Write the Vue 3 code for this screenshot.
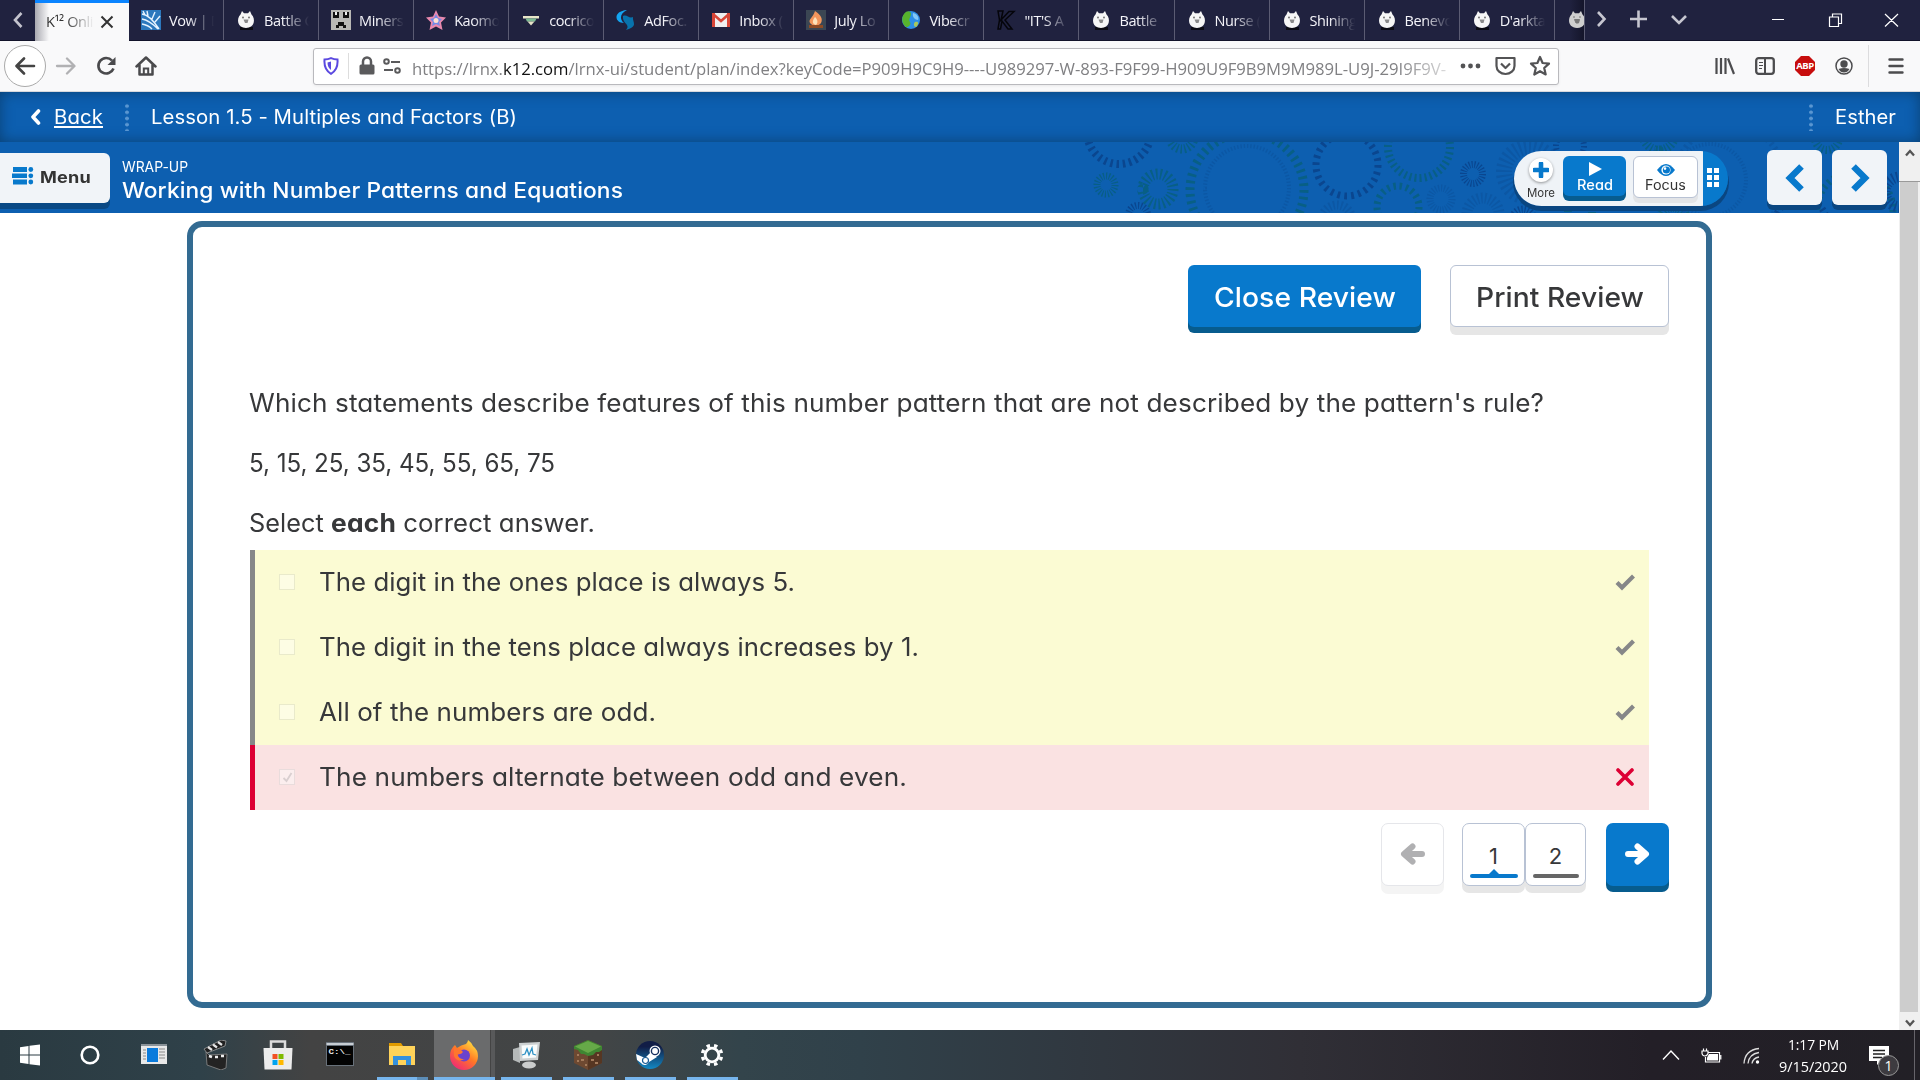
<script setup>
// Keeps a label at a set width: a little letter spacing, the rest by widening the glyphs.
const vFit = {
  mounted(el, { value }) {
    if (!value) return
    const first = el.getBoundingClientRect().width
    el.style.letterSpacing = ((value - first) * 0.15) / el.textContent.length + 'px'
    const natural = el.getBoundingClientRect().width
    el.style.transformOrigin = '0 50%'
    el.style.transform = `scaleX(${value / natural})`
    el.style.marginRight = value - natural + 'px'
  },
}

const tabs = [
  { icon: 'vow', label: 'Vow | D' },
  { icon: 'cat', label: 'Battle C' },
  { icon: 'mine', label: 'Miners' },
  { icon: 'star', label: 'Kaomo' },
  { icon: 'tri', label: 'cocrico' },
  { icon: 'swirl', label: 'AdFoc.' },
  { icon: 'mail', label: 'Inbox (' },
  { icon: 'fire', label: 'July Lo' },
  { icon: 'globe', label: 'Vibecr' },
  { icon: 'k', label: '"IT\'S A' },
  { icon: 'cat', label: 'Battle' },
  { icon: 'cat', label: 'Nurse (' },
  { icon: 'cat', label: 'Shining' },
  { icon: 'cat', label: 'Benevo' },
  { icon: 'cat', label: "D'arkta" },
]

const navy = '#0a468f'
const green = '#085f85'
const faint = '#0c57a4'
const rings = [
  { x: 49, y: -10, r: 32, w: 8, c: navy, n: 32 },
  { x: 112, y: -5, r: 12, w: 9, c: green, n: 20 },
  { x: 36, y: 43, r: 9, w: 7, c: green, n: 20 },
  { x: 88, y: 47, r: 15, w: 11, c: green, n: 22 },
  { x: 68, y: 73, r: 9.5, w: 7, c: navy, n: 20 },
  { x: 177, y: 48, r: 57, w: 9, c: green, n: 52 },
  { x: 177, y: 46, r: 42, w: 4, c: faint, n: 80 },
  { x: 277, y: 23, r: 31, w: 7, c: navy, n: 28 },
  { x: 349, y: 5, r: 31, w: 8, c: green, n: 38 },
  { x: 403, y: 32, r: 9.5, w: 7, c: navy, n: 22 },
  { x: 328, y: 65, r: 21, w: 7, c: green, n: 21 },
  { x: 371, y: 57, r: 11, w: 7, c: faint, n: 24 },
  { x: 267, y: 78, r: 15, w: 9, c: faint, n: 24 },
  { x: 413, y: 72, r: 16, w: 11, c: faint, n: 26 },
  { x: 459, y: 30, r: 25, w: 16, c: faint, n: 32 },
  { x: 453, y: 78, r: 10, w: 9, c: navy, n: 22 },
  { x: 510, y: 70, r: 12, w: 8, c: green, n: 22 },
  { x: 500, y: 4, r: 14, w: 6, c: navy, n: 22 },
  { x: 589, y: -8, r: 16, w: 9, c: green, n: 28 },
  { x: 603, y: 78, r: 13, w: 10, c: green, n: 24 },
  { x: 640, y: 38, r: 36, w: 4, c: faint, n: 70 },
  { x: 660, y: 38, r: 55, w: 6, c: faint, n: 60 },
  { x: 731, y: 82, r: 26, w: 7, c: navy, n: 30 },
  { x: 757, y: -4, r: 12, w: 8, c: green, n: 20 },
  { x: 785, y: 68, r: 38, w: 7, c: green, n: 40 },
  { x: 830, y: 50, r: 15, w: 11, c: navy, n: 24 },
]

const answers = [
  { text: 'The digit in the ones place is always 5.', width: 476, right: true },
  { text: 'The digit in the tens place always increases by 1.', width: 600, right: true },
  { text: 'All of the numbers are odd.', width: 337, right: true },
  { text: 'The numbers alternate between odd and even.', width: 588, right: false },
]

const apps = ['start', 'cortana', 'news', 'clap', 'store', 'cmd', 'folder', 'firefox', 'monitor', 'grass', 'steam', 'gear']
const running = ['folder', 'firefox', 'monitor', 'grass', 'steam', 'gear']
</script>

<template>
  <div class="screen">
    <header class="tabbar">
      <div class="scroll-left">
        <svg width="12" height="18" viewBox="0 0 12 18"><path d="M9.500 2 3 9l6.500 7" fill="none" stroke="#c3c3cd" stroke-width="2.600" /></svg>
      </div>
      <div class="tab active">
        <span class="fade dark">K¹² Onli</span>
        <svg width="14" height="14" viewBox="0 0 14 14"><path d="M1.500 1.500 12.500 12.500M12.500 1.500 1.500 12.500" stroke="#333" stroke-width="2" /></svg>
      </div>
      <div v-for="(t, i) in tabs" :key="i" class="tab">
        <svg class="fav" viewBox="0 0 20 20">
          <template v-if="t.icon === 'cat'">
            <path d="M4 17h13v3H4z" fill="#0b0b14" />
            <path d="M4.500 4.500 6 1l2 2.200h4L14 1l1.500 3.500C20 9 18.500 18 10 18S0 9 4.500 4.500z" fill="#f6f6f6" />
            <circle cx="7" cy="7.500" r=".9" fill="#666" /><circle cx="13" cy="7.500" r=".9" fill="#666" /><path d="M7.500 9.500h5l-1 3.500H9z" fill="#8a8a8a" />
          </template>
          <template v-else-if="t.icon === 'vow'">
            <path d="M0 0h20v20H0z" fill="#2c78bd" />
            <path d="M1 4q8 1 17 15M1 9q7 1 16 10M1 14q6 1 10 5M7 6 6 1M11 9l3-7M14 12l5-6M4 5 2 1" stroke="#e6f3ff" stroke-width="1.400" fill="none" />
          </template>
          <template v-else-if="t.icon === 'mine'">
            <path d="M0 0h20v20H0z" fill="#b8b8b5" /><path d="M2 2h6v6H2zM12 2h6v6h-6zM7 12h6v3h2v3h-3v-2H8v2H5v-3h2z" fill="#111" /><path d="M4 2h2v3H4zM14 2h2v3h-2z" fill="#eee" />
          </template>
          <template v-else-if="t.icon === 'star'">
            <path d="m10 0 3 6.500 7 1-5 5 1.500 7.500L10 16.500 3.500 20 5 12.500l-5-5 7-1z" fill="#e989ae" /><path d="m10 4 2 4 4 1-3 3 1 4-4-2-4 2 1-4-3-3 4-1z" fill="#718be8" /><circle cx="10" cy="10.500" r="2.500" fill="#ffe0d2" />
          </template>
          <template v-else-if="t.icon === 'tri'">
            <path d="M2 6h16v2.500H2z" fill="#e8e6c9" /><path d="M4.500 8.500h11L14 11.500H6z" fill="#7cba94" /><path d="M6.500 11.500h7L10 15.500z" fill="#e6e3c7" />
          </template>
          <template v-else-if="t.icon === 'swirl'">
            <path d="M11 0C-3 1-2 13 8 13 4 10 3 4 11 0z" fill="#13a4f0" /><path d="M7 6c4-2 6 3 10 1-1 5 6 9-7 13 5-6-4-6-3-14z" fill="#0873ad" />
          </template>
          <template v-else-if="t.icon === 'mail'">
            <path d="M1 3h18v14H1z" fill="#efefef" /><path d="M1 3h3v14H1zM16 3h3v14h-3z" fill="#d84638" /><path d="m2 4 8 7 8-7" fill="none" stroke="#d84638" stroke-width="2.500" />
          </template>
          <template v-else-if="t.icon === 'fire'">
            <path d="M0 0h20v20H0z" fill="#3b4653" /><path d="M9 1c6 4 8 8 6 12-3 4-9 3-11 0-2-4 3-5 5-12z" fill="#f3965c" /><path d="M9 7c3 3 3 6 1 8-4-1-4-4-1-8z" fill="#fde2ba" /><path d="M3 15h14v3H3z" fill="#8e4b25" />
          </template>
          <template v-else-if="t.icon === 'globe'">
            <circle cx="10" cy="10" r="9" fill="#2d8fe8" /><path d="M3 4c3-4 7-3 7 0S7 9 9 12s-3 6-4 5C1 14 0 8 3 4z" fill="#57b32d" /><path d="M14 12c4-1 4 2 1 5-2 0-3-3-1-5z" fill="#a9c75b" /><path d="M12 3c5 1 6 5 5 7-3 0-6-3-5-7z" fill="#82c7f6" />
          </template>
          <template v-else>
            <path d="M2 1h5l-2 9 8-8.500h5L9 10l7 9h-4l-6-8-1.500 8H2L3.500 10z" fill="none" stroke="#05050b" stroke-width="1.500" />
          </template>
        </svg>
        <span class="fade">{{ t.label }}</span>
      </div>
      <div class="tab cut">
        <svg class="fav" viewBox="0 0 20 20"><path d="M4.500 4.500 6 1l2 2.200h4L14 1l1.500 3.500C20 9 18.500 18 10 18S0 9 4.500 4.500z" fill="#cfcfcf" /><path d="M7.500 9.500h5l-1 3.500H9zM6 7h2M12 7h2" stroke="#777" fill="#777" /></svg>
      </div>
      <div class="tabtools">
        <svg width="100" height="24" viewBox="0 0 100 24" fill="none" stroke="#c6c6d0" stroke-width="2.600"><path d="m14 5 6.500 7-6.500 7M46 12h17M54.500 3.500v17M88 9l7 7 7-7" transform="translate(-1 -1)" /></svg>
      </div>
      <div class="wincontrols">
        <svg width="130" height="16" viewBox="0 0 130 16" fill="none" stroke="#fff" stroke-width="1.200"><path d="M2 7.500h12M59.500 5h9v9.500h-9zM62.500 5V2h9v9.500h-3M115 2l13 12.500M128 2l-13 12.500" /></svg>
      </div>
    </header>

    <nav class="toolbar">
      <div class="backbtn"><svg width="22" height="18" viewBox="0 0 22 18"><path d="M20 9H3M10 1.500 2.500 9l7.500 7.500" fill="none" stroke="#444" stroke-width="2.600" stroke-linecap="round" stroke-linejoin="round" /></svg></div>
      <svg class="nb" width="22" height="18" viewBox="0 0 22 18"><path d="M2 9h17M12 1.500 19.500 9 12 16.500" fill="none" stroke="#b1b1b3" stroke-width="2.300" stroke-linecap="round" stroke-linejoin="round" /></svg>
      <svg class="nb" width="22" height="20" viewBox="0 0 22 20"><path d="M18.500 12.500A7.800 7.800 0 1 1 17 4.500" fill="none" stroke="#4a4a4c" stroke-width="2.600" /><path d="M20.500 1v8h-8z" fill="#4a4a4c" /></svg>
      <svg class="nb" width="22" height="20" viewBox="0 0 22 20"><path d="M1.500 10.500 11 1.500l9.500 9M4.500 9v9.500h13V9" fill="none" stroke="#4a4a4c" stroke-width="2.500" stroke-linejoin="round" stroke-linecap="round" /><path d="M8.800 19v-6.500h4.400V19" fill="none" stroke="#4a4a4c" stroke-width="2" /></svg>
      <div class="urlbar">
        <svg class="shield" width="16" height="18" viewBox="0 0 16 18"><path d="M8 1.200q3 1.400 6.500 1.400C15 9 13 14 8 16.800 3 14 1 9 1.500 2.600 5 2.600 8 1.200 8 1.200z" fill="#fff" stroke="#5b49e0" stroke-width="2" /><path d="M8 4.500v8.500Q4.500 10.500 4.500 5.500z" fill="#5b49e0" /></svg>
        <i class="urlsep"></i>
        <svg width="16" height="20" viewBox="0 0 16 20"><path d="M4 9V5.500a4 4 0 0 1 8 0V9" fill="none" stroke="#5a5a5c" stroke-width="2.500" /><rect x=".5" y="8.500" width="15" height="10" rx="1.500" fill="#5a5a5c" /></svg>
        <svg class="perm" width="18" height="16" viewBox="0 0 18 16" fill="none" stroke="#5a5a5c" stroke-width="2"><circle cx="3.500" cy="3.500" r="2.300" /><circle cx="14.500" cy="12.500" r="2.300" /><path d="M8 4h9M1 12h9" /></svg>
        <div class="url"><span v-fit="1034">https://lrnx.<b>k12.com</b>/lrnx-ui/student/plan/index?keyCode=P909H9C9H9----U989297-W-893-F9F99-H909U9F9B9M9M989L-U9J-29I9F9V-</span></div>
        <svg class="urlicons" width="92" height="22" viewBox="0 0 92 22" fill="none" stroke="#535355" stroke-width="2.200" stroke-linejoin="round">
          <g fill="#535355" stroke="none"><circle cx="3" cy="11" r="2.400" /><circle cx="10.500" cy="11" r="2.400" /><circle cx="18" cy="11" r="2.400" /></g>
          <path d="M36.500 3h18v8a9 8 0 0 1-18 0zM41 8.500l4.500 4.500L50 8.500" /><path d="m80 2 2.600 6 6.400.6-4.800 4.400 1.500 6.500L80 16.200 74.300 19.500l1.500-6.500L71 8.600l6.400-.6z" />
        </svg>
      </div>
      <div class="rightnav">
        <svg width="20" height="18" viewBox="0 0 20 18" stroke="#4c4c4e" stroke-width="2.200"><path d="M1.500 1v16M6 1v16M10.500 1v16M13 1.500 19 17" /></svg>
        <svg width="20" height="18" viewBox="0 0 20 18" fill="none" stroke="#4c4c4e"><rect x="1.200" y="1.200" width="17.600" height="15.600" rx="2.500" stroke-width="2.300" /><path d="M10 1v16" stroke-width="2" /><path d="M4 5.500h4M4 8.500h4M4 11.500h3" stroke-width="1.200" /></svg>
        <div class="abp">ABP</div>
        <svg width="18" height="18" viewBox="0 0 18 18"><circle cx="9" cy="9" r="8" fill="none" stroke="#4c4c4e" stroke-width="1.500" /><circle cx="9" cy="7" r="3.700" fill="#4c4c4e" /><path d="M3.500 12q5.500-2 11 0-2 3.500-5.500 3.500T3.500 12z" fill="#4c4c4e" /></svg>
        <i class="navsep"></i>
        <svg width="16" height="16" viewBox="0 0 16 16" stroke="#4c4c4e" stroke-width="2.400" stroke-linecap="round"><path d="M1.500 1.500h13M1.500 8h13M1.500 14.500h13" /></svg>
      </div>
    </nav>

    <div class="lessonbar">
      <svg width="12" height="16" viewBox="0 0 12 16"><path d="M9.500 2 4 8l5.500 6" fill="none" stroke="#fff" stroke-width="3.600" stroke-linejoin="round" stroke-linecap="round" /></svg>
      <a class="back"><span v-fit="49">Back</span></a>
      <i class="dots"></i>
      <span class="lesson" v-fit="366">Lesson 1.5 - Multiples and Factors (B)</span>
      <i class="dots end"></i>
      <span class="user" v-fit="61">Esther</span>
    </div>

    <div class="viewport">
      <main>
        <section class="subhead">
          <svg class="gears" width="829" height="71" viewBox="0 0 829 71">
            <circle v-for="(g, i) in rings" :key="i" :cx="g.x" :cy="g.y" :r="g.r" fill="none" :stroke="g.c" :stroke-width="g.w" pathLength="100" :stroke-dasharray="`${40 / g.n} ${60 / g.n}`" />
          </svg>
          <div class="menu">
            <svg width="22" height="18" viewBox="0 0 22 18" fill="#0879cc"><path d="M1 0h14v5H1zM0 6.500h15v4.500H0zM1 12.500h14v5H1z" /><circle cx="18.800" cy="2.500" r="2.400" /><circle cx="18.800" cy="8.800" r="2.400" /><circle cx="18.800" cy="15" r="2.400" /></svg>
            <span v-fit="51">Menu</span>
          </div>
          <div class="titles">
            <span class="kicker" v-fit="66">WRAP-UP</span>
            <span class="title" v-fit="501">Working with Number Patterns and Equations</span>
          </div>
          <div class="pill">
            <div class="more">
              <div class="plus"><svg width="16" height="16" viewBox="0 0 16 16"><path d="M8 1.500v13M1.500 8h13" stroke="#0879cc" stroke-width="4.600" stroke-linecap="round" /></svg></div>
              <span v-fit="28">More</span>
            </div>
            <div class="read"><svg width="14" height="14" viewBox="0 0 14 14"><path d="M1 0v14l13-7z" fill="#fff" /></svg><span v-fit="36">Read</span></div>
            <div class="focus"><svg width="18" height="12" viewBox="0 0 18 12"><path d="M0 6q9-12 18 0-9 12-18 0z" fill="#0879cc" /><circle cx="9" cy="6" r="4.600" fill="#fff" /><circle cx="9.400" cy="6" r="3.600" fill="#0879cc" /><circle cx="8" cy="4.600" r="1.300" fill="#fff" /></svg><span v-fit="41">Focus</span></div>
            <div class="grip"><i v-for="n in 6" :key="n"></i></div>
          </div>
          <div class="arrow"><svg width="24" height="32" viewBox="0 0 24 32"><path d="M18.500 4.500 7 16l11.500 11.500" fill="none" stroke="#0879cc" stroke-width="6.500" /></svg></div>
          <div class="arrow"><svg width="24" height="32" viewBox="0 0 24 32"><path d="M5.500 4.500 17 16 5.500 27.500" fill="none" stroke="#0879cc" stroke-width="6.500" /></svg></div>
        </section>

        <section class="card">
          <div class="actions">
            <div class="btn primary"><span v-fit="182">Close Review</span></div>
            <div class="btn plain"><span v-fit="168">Print Review</span></div>
          </div>
          <div class="question">
            <p><span v-fit="1295">Which statements describe features of this number pattern that are not described by the pattern's rule?</span></p>
            <p><span v-fit="306">5, 15, 25, 35, 45, 55, 65, 75</span></p>
            <p><span v-fit="82">Select </span><b v-fit="65">each</b><span v-fit="199">&nbsp;correct answer.</span></p>
          </div>
          <div class="answers">
            <div v-for="(a, i) in answers" :key="i" class="answer" :class="{ wrong: !a.right }">
              <i class="box"><svg v-if="!a.right" width="11" height="11" viewBox="0 0 11 11"><path d="M1.500 6 4.500 9l5-8" fill="none" stroke="#d9cfd0" stroke-width="1.800" /></svg></i>
              <span v-fit="a.width">{{ a.text }}</span>
              <svg v-if="a.right" class="mark" width="22" height="18" viewBox="0 0 22 18"><path d="M3 9.500 8 14.500 19.500 3" fill="none" stroke="#868788" stroke-width="4.200" /></svg>
              <svg v-else class="mark" width="22" height="18" viewBox="0 0 22 18"><path d="m4 2 14 14M18 2 4 16" stroke="#dd0034" stroke-width="3.600" stroke-linecap="round" /></svg>
            </div>
          </div>
          <div class="pager">
            <div class="pg prev"><svg width="26" height="22" viewBox="0 0 26 22"><path d="M22 11H5M12.500 3.500 4 11l8.500 7.500" fill="none" stroke="#b0b0b2" stroke-width="6" stroke-linecap="round" stroke-linejoin="round" /></svg></div>
            <div class="pg one"><span>1</span><i class="line on"></i></div>
            <div class="pg two"><span>2</span><i class="line"></i></div>
            <div class="pg next"><svg width="26" height="22" viewBox="0 0 26 22"><path d="M4 11h17M13.500 3.500 22 11l-8.500 7.500" fill="none" stroke="#fff" stroke-width="6" stroke-linecap="round" stroke-linejoin="round" /></svg></div>
          </div>
        </section>
      </main>
      <aside class="scrollbar">
        <div class="up"><svg width="10" height="8" viewBox="0 0 10 8"><path d="M1 6.500 5 2l4 4.500" fill="none" stroke="#555" stroke-width="2.300" /></svg></div>
        <div class="thumb"></div>
        <div class="down"><svg width="10" height="8" viewBox="0 0 10 8"><path d="M1 1.500 5 6l4-4.500" fill="none" stroke="#555" stroke-width="2.300" /></svg></div>
      </aside>
    </div>

    <footer class="taskbar">
      <div v-for="a in apps" :key="a" class="app" :class="[a, { run: running.includes(a) }]">
        <svg width="30" height="30" viewBox="0 0 30 30">
          <path v-if="a === 'start'" d="M5 7.200 13.500 6v8.500H5zM14.500 5.800 25 4.500v10H14.500zM5 15.500h8.500V24L5 22.800zM14.500 15.500H25v10l-10.500-1.300z" fill="#fff" />
          <circle v-else-if="a === 'cortana'" cx="15" cy="15" r="8.300" fill="none" stroke="#fff" stroke-width="2.600" />
          <template v-else-if="a === 'news'"><path d="M2 5h26v19H2z" fill="#e8e8e8" /><path d="M2 4h26v2H2z" fill="#899298" /><path d="M8 8h11v14H8z" fill="#0a7bdc" /><path d="M4 10h3M4 13h3M4 16h3M4 19h3M20 9h6M20 12h6M20 15h6M20 18h6" stroke="#8a8a8a" /></template>
          <template v-else-if="a === 'clap'"><path d="m3 9 17-9 5 1-1 5L6 13z" fill="#202020" stroke="#a0a0a0" stroke-width=".8" /><path d="m7 7 4 3M12 4.500l4 3M17 2l4 3" stroke="#e4e4e4" stroke-width="2.200" /><path d="m5 12 3 3 18-1-1 14-5 2-14-5z" fill="#232323" stroke="#8c8c8c" stroke-width=".8" /><path d="m8 16 3 1M14 17l3 0M20 16l3 0" stroke="#eee" stroke-width="2.500" /></template>
          <template v-else-if="a === 'store'"><path d="M8 8V1.500h14V8" fill="none" stroke="#ddd" stroke-width="2.500" /><path d="M.5 8h29l-1 21.500h-27z" fill="#ececec" /><path d="M9.500 14h5v5h-5z" fill="#f25022" /><path d="M15.500 14h5v5h-5z" fill="#7fba00" /><path d="M9.500 20h5v5h-5z" fill="#00a4ef" /><path d="M15.500 20h5v5h-5z" fill="#ffb900" /></template>
          <template v-else-if="a === 'cmd'"><path d="M1 2h28v24H1z" fill="#68717a" /><path d="M1.500 3h27v2h-27z" fill="#c7cdd3" /><path d="M2 6h26v19H2z" fill="#030303" /><text x="3.500" y="14" font-size="8" textLength="22" lengthAdjust="spacingAndGlyphs" font-family="Liberation Mono, monospace" font-weight="700" fill="#eee">C:\_</text></template>
          <template v-else-if="a === 'folder'"><path d="M2 3h12l2 3H2z" fill="#e19b00" /><path d="M2 6h26v19H2z" fill="#ffd35a" /><path d="M6 25v-9h18v9h-5v-5h-8v5z" fill="#3591dd" /></template>
          <template v-else-if="a === 'firefox'"><defs><linearGradient id="ff" x1=".9" y1="0" x2=".2" y2="1"><stop offset="0" stop-color="#fff044" /><stop offset=".5" stop-color="#ff7825" /><stop offset="1" stop-color="#ef247b" /></linearGradient></defs><path d="M17 4q2-2 2-4 4 3 5 6 5 4 5 10a14 14 0 0 1-28 0Q1 9 6 5l2 3q4-3 9-4z" fill="url(#ff)" /><circle cx="15" cy="15.500" r="6" fill="#6b43cc" /><path d="M5 8q6 0 9 4-2 3-6 2 2 6 8 5-8 4-11-3z" fill="#ff762d" /></template>
          <template v-else-if="a === 'monitor'"><path d="M2 9l7-2v16l-7-3z" fill="#b5b9b9" /><path d="m8 3 21-1-2 18-18 1z" fill="#cdd1d2" /><path d="m10.500 5.500 16-1-1.500 13-13.500 1z" fill="#f9fcfc" /><path d="M11 15l3-1 2-5 2 6 3-7 1 6 3 1" fill="none" stroke="#2d91c5" stroke-width="1.300" /><ellipse cx="18" cy="25" rx="7" ry="3.500" fill="#cacccc" /></template>
          <template v-else-if="a === 'grass'"><path d="M15 0 29 6v17l-14 7-14-7V6z" fill="#6e4931" /><path d="m15 14 14-7v16l-14 7z" fill="#563622" /><path d="m15 0 14 6v4l-3 2-3 0-3 3-5 1-4-2-3 0-3-4-4-1V6z" fill="#3f8632" /><path d="m15 1 13 5.500L15 13 2 6.500z" fill="#66a948" /><path d="M4 15h2M8 20h3M4 21h2M12 25h2M18 20h3M24 15h2M22 23h3" stroke="#a27a5b" stroke-width="2" /></template>
          <template v-else-if="a === 'steam'"><defs><linearGradient id="st" x1="0" y1="0" x2="0" y2="1"><stop offset=".2" stop-color="#111d46" /><stop offset="1" stop-color="#1389c4" /></linearGradient></defs><circle cx="15" cy="15" r="14" fill="url(#st)" /><path d="m1 14 9 4 6-6 6 5-8 5a4.500 4.500 0 0 1-8 1L2 20z" fill="#fff" /><circle cx="20" cy="11" r="5.500" fill="#fff" /><circle cx="20" cy="11" r="3.600" fill="none" stroke="#17305f" stroke-width="1.400" /><circle cx="10.500" cy="20.500" r="3" fill="none" stroke="#1a5b94" stroke-width="1.200" /></template>
          <template v-else><circle cx="15" cy="15" r="6.800" fill="none" stroke="#fff" stroke-width="2.800" /><circle cx="15" cy="15" r="9.600" fill="none" stroke="#fff" stroke-width="3.400" pathLength="80" stroke-dasharray="4.600 5.400" stroke-dashoffset="-2.700" /></template>
        </svg>
      </div>
      <div class="tray">
        <svg width="18" height="12" viewBox="0 0 18 12"><path d="m1 10.500 8-8.500 8 8.500" fill="none" stroke="#fff" stroke-width="1.400" /></svg>
        <svg class="batt" width="22" height="16" viewBox="0 0 22 16"><path d="M7 4.500h11.500v9.500H4.500V9M19.800 7v4.500M1 3h6v2.500Q6 8 4 8 1.500 8 1 5.500zM2.500 3V.5M5.500 3V.5" fill="none" stroke="#fff" stroke-width="1.200" /><path d="M8 6h9v6.500H6V9.500z" fill="#fff" /></svg>
        <svg class="wifi" width="18" height="18" viewBox="0 0 18 18" fill="none" stroke="#ddd" stroke-width="1.300"><path d="M1 16.500Q2 3 16 1.500M5 16.500Q6 7 16 5.500M9 16.500Q10 11 16 10" /><circle cx="14.500" cy="15" r="1.700" fill="#fff" stroke="none" /></svg>
        <div class="clock"><span v-fit="51">1:17 PM</span><span v-fit="68">9/15/2020</span></div>
        <div class="notice"><svg width="20" height="20" viewBox="0 0 20 20"><path d="M0 0h20v15h-8l-4 4v-4H0z" fill="#fff" /><path d="M4 4.500h12M4 8h12M4 11.500h9" stroke="#222" stroke-width="1.300" /></svg><b>1</b></div>
        <i class="desk"></i>
      </div>
    </footer>
  </div>
</template>

<style>
html, body { margin: 0; overflow: hidden; }
</style>

<style scoped>
.screen { width: 1920px; height: 1080px; display: flex; flex-direction: column; background: #fff; font-family: Inter, "Open Sans", sans-serif; font-feature-settings: "cv11"; overflow: hidden; }
.screen * { box-sizing: border-box; }
svg { display: block; flex: none; }
span { white-space: pre; }

.tabbar { height: 41px; flex: none; display: flex; background: #20223f; font: 15px "Open Sans", sans-serif; color: #f5f5fa; border-bottom: 1px solid #12132a; }
.scroll-left { width: 35px; display: flex; align-items: center; justify-content: center; flex: none; }
.tab { width: 95.060px; flex: none; display: flex; align-items: center; padding-left: 12px; gap: 8px; border-right: 1px solid #5b5c73; }
.tab.active { width: 94px; height: 41px; padding: 0 15px 0 11px; gap: 4px; justify-content: space-between; color: #333; border: 0; border-top: 3px solid #0a84ff; background: linear-gradient(90deg, #a9a9b0, #f9f9fa 14px); }
.fav { width: 20px; height: 20px; }
.fade { flex: none; width: 47px; overflow: hidden; letter-spacing: -0.400px; line-height: 38px; padding-top: 2px; font-size: 14.500px; mask-image: linear-gradient(90deg, #000 40%, transparent 96%); }
.fade.dark { width: 50px; padding: 0; line-height: 34px; }
.tab.cut { width: 30px; background: linear-gradient(90deg, #20223f 50%, #14152a); overflow: hidden; }
.tabtools { width: 104px; display: flex; align-items: center; flex: none; }
.tabtools svg { overflow: visible; }
.wincontrols { margin-left: auto; padding-right: 20px; display: flex; align-items: center; }

.toolbar { height: 51px; flex: none; display: flex; align-items: center; background: #f9f9fa; border-bottom: 1px solid #d8d8dc; padding-left: 4px; font-family: "Open Sans", sans-serif; }
.backbtn { width: 42px; height: 42px; border-radius: 50%; border: 1px solid #aaa; background: #fff; display: flex; align-items: center; justify-content: center; margin-right: 9px; }
.nb { margin-right: 18px; }
.urlbar { width: 1246px; height: 37px; margin-left: 138px; border: 1px solid #b9b9bd; border-radius: 3px; background: #fff; display: flex; align-items: center; box-shadow: 0 1px 3px #0001; }
.shield { margin-left: 9px; }
.urlsep { width: 1px; height: 26px; background: #ddd; margin: 0 10px 0 9px; }
.perm { margin-left: 8px; }
.url { margin-left: 11px; width: 1036px; overflow: hidden; font-size: 17px; line-height: 33px; color: #808083; padding-top: 4px; mask-image: linear-gradient(90deg, #000 95%, #0004 100%); }
.url span { display: inline-block; }
.url b { font-weight: 400; color: #111; }
.urlicons { margin-left: auto; margin-right: 6px; }
.rightnav { margin-left: auto; display: flex; align-items: center; gap: 20px; padding-right: 16px; }
.abp { width: 20px; height: 20px; background: #c70d0d; color: #fff; font: 700 9.500px/20px "Open Sans", sans-serif; letter-spacing: -0.400px; text-align: center; clip-path: polygon(30% 0, 70% 0, 100% 30%, 100% 70%, 70% 100%, 30% 100%, 0 70%, 0 30%); }
.navsep { width: 1px; height: 42px; background: #dcdcde; margin: 0 -1px 0 -5px; }

.lessonbar { height: 50px; flex: none; display: flex; align-items: center; background: #0d5fb0; box-shadow: inset 0 0 14px #0a4174; color: #fff; font-size: 19.500px; padding-left: 29px; padding-right: 24px; }
.back { margin-left: 13px; }
.back span { text-decoration: underline; text-underline-offset: 2px; text-decoration-thickness: 1.500px; }
.back span, .titles span, .pill span, .menu span, .btn span, p span, p b, .answer span, .clock span { display: inline-block; }
.dots { width: 4px; height: 28px; margin: 0 22px; background: radial-gradient(circle, #5a96d1 1.600px, transparent 2px) 0 0 / 4px 6.200px; }
.lesson { white-space: nowrap; }
.dots.end { margin-left: auto; }

.viewport { height: 888px; flex: none; display: flex; }
main { width: 1899px; display: flex; flex-direction: column; }
.subhead { height: 71px; flex: none; background: #0d5fb0; display: flex; align-items: flex-start; position: relative; overflow: hidden; }
.gears { position: absolute; left: 1070px; top: 0; }
.menu { width: 110px; height: 50px; margin-top: 11px; background: #f1f4f8; border-radius: 0 6px 6px 0; box-shadow: 0 6px 0 #0a4985; display: flex; align-items: center; gap: 6px; padding-left: 12px; padding-bottom: 4px; color: #333; font-weight: 700; font-size: 16.500px; }
.menu span { padding-top: 2px; }
.titles { display: flex; flex-direction: column; align-items: flex-start; margin: 15px 0 0 12px; color: #fff; }
.kicker { font-size: 14px; line-height: 20px; }
.title { font-size: 21.500px; line-height: 26px; font-weight: 500; }
.pill { position: relative; margin: 9px 0 0 auto; width: 214px; height: 55px; border-radius: 28px; box-shadow: 0 4px 0 1px #0a4681; background: linear-gradient(90deg, #eff3f7 189px, #0879cc 189px); display: flex; align-items: flex-start; padding-left: 12px; }
.more { width: 30px; display: flex; flex-direction: column; align-items: center; font-size: 11.500px; color: #333; padding-top: 7px; line-height: 14px; }
.plus { width: 24px; height: 24px; background: #fff; border-radius: 50%; box-shadow: 0 1px 3px #0006; display: flex; align-items: center; justify-content: center; margin-bottom: 4px; }
.read { width: 63px; height: 40px; margin: 5px 0 0 7px; border-radius: 6px; background: #0879cc; box-shadow: 0 5px 0 #075c90; color: #fff; display: flex; flex-direction: column; align-items: center; padding-top: 6px; font-size: 14px; line-height: 18px; font-weight: 500; }
.focus { width: 65px; height: 42px; margin: 5px 0 0 7px; border-radius: 6px; background: #fff; border: 1px solid #b8c2d4; box-shadow: 0 5px 0 #e2e4e7; color: #333; display: flex; flex-direction: column; align-items: center; padding-top: 7px; font-size: 14px; line-height: 17px; }
.grip { display: grid; grid-template-columns: 5px 5px; gap: 2px; margin: 17px 0 0 9px; }
.grip i { width: 5px; height: 5px; background: #fff; }
.arrow { position: relative; width: 55px; height: 55px; margin: 8px 0 0 10px; border-radius: 6px; background: #f1f4f8; box-shadow: 0 5px 0 #0a4681; display: flex; align-items: center; justify-content: center; }
.pill + .arrow { margin-left: 39px; }
.arrow:last-child { margin-right: 12px; }

.card { width: 1525px; height: 787px; margin: 8px 0 0 187px; border: 6px solid #336b92; border-radius: 15px; padding: 38px 37px 0 57px; color: #37383a; }
.actions { display: flex; justify-content: flex-end; gap: 29px; height: 70px; }
.btn { height: 62px; border-radius: 6px; display: flex; align-items: center; justify-content: center; font-size: 27.500px; font-weight: 500; padding-top: 2px; padding-bottom: 0; }
.btn span { line-height: 34px; margin-top: -1px; }
.primary { width: 233px; background: #0879cc; color: #fff; box-shadow: 0 6px 0 #075c8e; }
.plain { width: 219px; border: 1px solid #b8c2d4; background: #fff; box-shadow: 0 8px 0 #e6e6e6; }
.question { margin-top: 38px; font-size: 25px; margin-left: -1px; }
p { margin: 0; height: 60px; line-height: 60px; display: flex; white-space: nowrap; }
.answers { width: 1399px; margin-top: -3px; }
.answer { height: 65px; display: flex; align-items: center; border-left: 5px solid #868788; background: #fbfbd3; padding-left: 24px; font-size: 25px; }
.answer.wrong { background: #fae2e2; border-color: #dd0034; }
.answer span { margin-left: 24px; line-height: 65px; }
.box { width: 16px; height: 16px; margin-bottom: 1px; border: 1.500px solid #e9eacb; background: #fdfde4; display: flex; align-items: center; justify-content: center; }
.wrong .box { background: #fbeeee; border-color: #e9dcdc; }
.mark { margin-left: auto; margin-right: 13px; margin-bottom: 1px; }
.pager { display: flex; justify-content: flex-end; margin-top: 13px; }
.pg { position: relative; width: 63px; height: 63px; border: 1px solid #b8c2d4; border-radius: 7px; background: #fff; display: flex; align-items: center; justify-content: center; font-size: 22px; box-shadow: 0 7px 0 #e6e6e6; }
.pg span { margin-top: 2px; }
.pg svg { margin-bottom: 1px; }
.prev { border-color: #e5e6ea; box-shadow: 0 8px 0 #f4f4f4; margin-right: 18px; }
.two { width: 61px; margin-right: 20px; }
.next { border: 0; background: #0879cc; box-shadow: 0 6px 0 #075c8e; }
.next svg { margin-right: 2px; }
.line { position: absolute; left: 7px; right: 6px; bottom: 7px; height: 4px; border-radius: 2px; background: #666; }
.line.on { background: #0879cc; }
.line.on::before { content: ""; position: absolute; left: 50%; top: -5px; margin-left: -5px; border: 5px solid transparent; border-top: 0; border-bottom-color: #0879cc; }

.scrollbar { width: 21px; background: #f0f0f0; display: flex; flex-direction: column; }
.up { height: 40px; border-bottom: 1px solid #999; display: flex; justify-content: center; padding-top: 7px; }
.thumb { height: 830px; width: 18px; margin-left: 1px; background: #cdcdcd; }
.down { height: 18px; display: flex; justify-content: center; padding-top: 7px; }

.taskbar { height: 50px; flex: none; display: flex; background: linear-gradient(90deg, #2a3a41 0, #2f4149 200px, #434343 310px, #424546 600px, #33444b 740px, #30414a 860px, #302f36 1300px, #231f27 1650px, #222026 1920px); }
.app { position: relative; width: 62px; height: 50px; display: flex; align-items: center; justify-content: center; }
.start, .cortana { width: 60px; }
.news { margin-left: 3px; }
.run::after { content: ""; position: absolute; left: 6px; bottom: 0; width: 51px; height: 3px; background: #76b5ed; }
.folder::after { background: linear-gradient(90deg, #76b5ed 40px, #5c8db7 40px); }
.firefox::before { content: ""; position: absolute; left: 1px; top: 0; width: 61px; height: 50px; background: linear-gradient(90deg, #6a6b6c 56px, #444 56px, #444 57px, #58595a 57px); }
.firefox::after { left: 1px; width: 61px; }
.app svg { position: relative; }
.tray { margin-left: auto; display: flex; align-items: center; color: #fff; font: 15px "Open Sans", sans-serif; }
.batt { margin-left: 21px; margin-top: 1px; }
.wifi { margin-left: 20px; margin-top: 2px; }
.clock { width: 72px; margin-left: 16px; display: flex; flex-direction: column; align-items: center; line-height: 22px; padding-bottom: 1px; }
.notice { position: relative; margin-left: 20px; margin-top: 2px; width: 31px; }
.notice b { position: absolute; left: 9px; top: 9px; width: 21px; height: 21px; border-radius: 50%; border: 1px solid #999; background: #3d3b40; font: 14px/19px "Open Sans", sans-serif; text-align: center; }
.desk { width: 1px; height: 50px; background: #66646a; margin: 0 5px 0 14px; }
</style>
